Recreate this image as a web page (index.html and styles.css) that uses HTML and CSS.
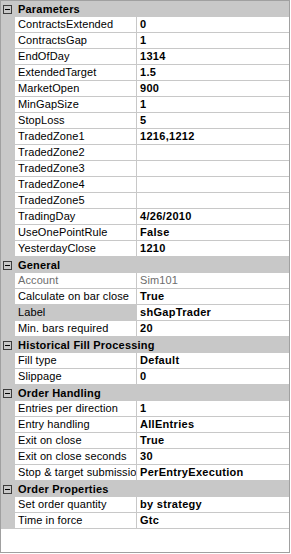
FILE: index.html
```html
<!DOCTYPE html>
<html lang="en">
<head>
    <meta charset="UTF-8">
    <meta name="viewport" content="width=device-width, initial-scale=1.0">
    <title>Strategy Properties</title>
    <link rel="stylesheet" href="styles.css">
</head>
<body>
    <div class="grid">
        <div class="cat"><span class="toggle"></span>Parameters</div>
        <div class="row"><div class="name">ContractsExtended</div><div class="value">0</div></div>
        <div class="row"><div class="name">ContractsGap</div><div class="value">1</div></div>
        <div class="row"><div class="name">EndOfDay</div><div class="value">1314</div></div>
        <div class="row"><div class="name">ExtendedTarget</div><div class="value">1.5</div></div>
        <div class="row"><div class="name">MarketOpen</div><div class="value">900</div></div>
        <div class="row"><div class="name">MinGapSize</div><div class="value">1</div></div>
        <div class="row"><div class="name">StopLoss</div><div class="value">5</div></div>
        <div class="row"><div class="name">TradedZone1</div><div class="value">1216,1212</div></div>
        <div class="row"><div class="name">TradedZone2</div><div class="value"></div></div>
        <div class="row"><div class="name">TradedZone3</div><div class="value"></div></div>
        <div class="row"><div class="name">TradedZone4</div><div class="value"></div></div>
        <div class="row"><div class="name">TradedZone5</div><div class="value"></div></div>
        <div class="row"><div class="name">TradingDay</div><div class="value">4/26/2010</div></div>
        <div class="row"><div class="name">UseOnePointRule</div><div class="value">False</div></div>
        <div class="row"><div class="name">YesterdayClose</div><div class="value">1210</div></div>

        <div class="cat"><span class="toggle"></span>General</div>
        <div class="row readonly"><div class="name">Account</div><div class="value">Sim101</div></div>
        <div class="row"><div class="name">Calculate on bar close</div><div class="value">True</div></div>
        <div class="row selected"><div class="name">Label</div><div class="value">shGapTrader</div></div>
        <div class="row"><div class="name">Min. bars required</div><div class="value">20</div></div>

        <div class="cat"><span class="toggle"></span>Historical Fill Processing</div>
        <div class="row"><div class="name">Fill type</div><div class="value">Default</div></div>
        <div class="row"><div class="name">Slippage</div><div class="value">0</div></div>

        <div class="cat"><span class="toggle"></span>Order Handling</div>
        <div class="row"><div class="name">Entries per direction</div><div class="value">1</div></div>
        <div class="row"><div class="name">Entry handling</div><div class="value">AllEntries</div></div>
        <div class="row"><div class="name">Exit on close</div><div class="value">True</div></div>
        <div class="row"><div class="name">Exit on close seconds</div><div class="value">30</div></div>
        <div class="row"><div class="name">Stop &amp; target submission</div><div class="value">PerEntryExecution</div></div>

        <div class="cat"><span class="toggle"></span>Order Properties</div>
        <div class="row"><div class="name">Set order quantity</div><div class="value">by strategy</div></div>
        <div class="row"><div class="name">Time in force</div><div class="value">Gtc</div></div>
    </div>
</body>
</html>
```

FILE: styles.css
```css
body {
    margin: 0;
    padding: 0;
    background-color: #fff;
    font-family: "Liberation Sans", Arial, sans-serif;
    font-size: 11px;
    color: #000;
}

.grid {
    box-sizing: border-box;
    width: 290px;
    height: 553px;
    border: 1px solid #a0a0a0;
    background-color: #fff;
    overflow: hidden;
}

.cat {
    display: flex;
    align-items: center;
    height: 16px;
    padding-left: 2px;
    background-color: #c8c8c8;
    font-weight: bold;
    letter-spacing: 0.2px;
    white-space: nowrap;
}

.toggle {
    position: relative;
    box-sizing: border-box;
    width: 9px;
    height: 9px;
    margin-right: 6px;
    border: 1px solid #3c3c3c;
}

.toggle::after {
    content: "";
    position: absolute;
    left: 1px;
    top: 3px;
    width: 5px;
    height: 1px;
    background-color: #000;
}

.row {
    display: flex;
    height: 16px;
    padding-left: 14px;
    background-color: #c8c8c8;
}

.name,
.value {
    box-sizing: border-box;
    height: 16px;
    padding-left: 3px;
    line-height: 15px;
    border-bottom: 1px solid #c8c8c8;
    background-color: #fff;
    white-space: nowrap;
    overflow: hidden;
}

.name {
    width: 122px;
    border-right: 1px solid #c8c8c8;
    letter-spacing: 0.1px;
}

.value {
    flex: 1;
    font-weight: bold;
    letter-spacing: 0.3px;
}

.readonly .name,
.readonly .value {
    color: #6d6d6d;
    font-weight: normal;
    letter-spacing: 0.1px;
}

.selected .name {
    background-color: #c8c8c8;
}
```
